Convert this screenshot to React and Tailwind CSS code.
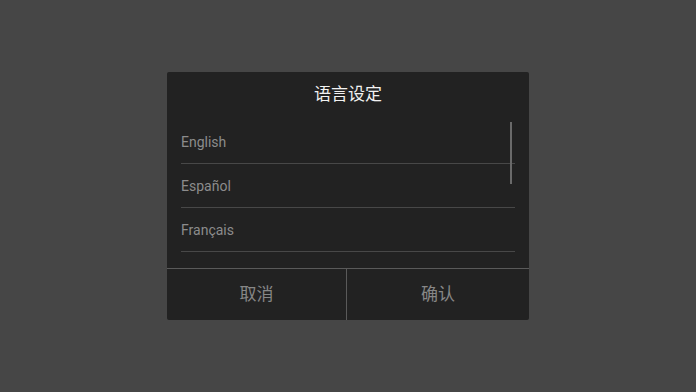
import { useState } from 'react';

const languages = ['English', 'Español', 'Français'];

export default function App() {
  const [selected, setSelected] = useState(null);

  return (
    <div
      className="w-[696px] h-[392px] bg-[#464646] flex items-center justify-center"
      style={{ fontFamily: 'Roboto, "Noto Sans CJK SC", sans-serif' }}
    >
      <div className="w-[362px] h-[248px] bg-[#222222] rounded-[2px] flex flex-col overflow-hidden">
        {/* titulo */}
        <div className="h-[48px] flex items-center justify-center text-[17px] text-[#f2f2f2] pb-[2px]">
          语言设定
        </div>

        {/* lista */}
        <div className="relative h-[148px] px-[14px]">
          {languages.map((lang, i) => (
            <button
              key={lang}
              onClick={() => setSelected(lang)}
              className={`w-full h-[44px] flex items-center text-left text-[14px] pt-[2px] border-b border-[#484848] ${
                selected === lang ? 'text-[#cccccc]' : 'text-[#8c8c8c]'
              }`}
            >
              {lang}
            </button>
          ))}
          {/* barra de scroll */}
          <div className="absolute right-[17px] top-[2px] w-[2px] h-[62px] bg-[#6a6a6a]" />
        </div>

        {/* botones */}
        <div className="flex flex-1 border-t border-[#5a5a5a]">
          <button className="w-[180px] flex items-center justify-center text-[17px] text-[#878787] border-r border-[#5a5a5a]">
            取消
          </button>
          <button className="flex-1 flex items-center justify-center text-[17px] text-[#878787]">
            确认
          </button>
        </div>
      </div>
    </div>
  );
}
